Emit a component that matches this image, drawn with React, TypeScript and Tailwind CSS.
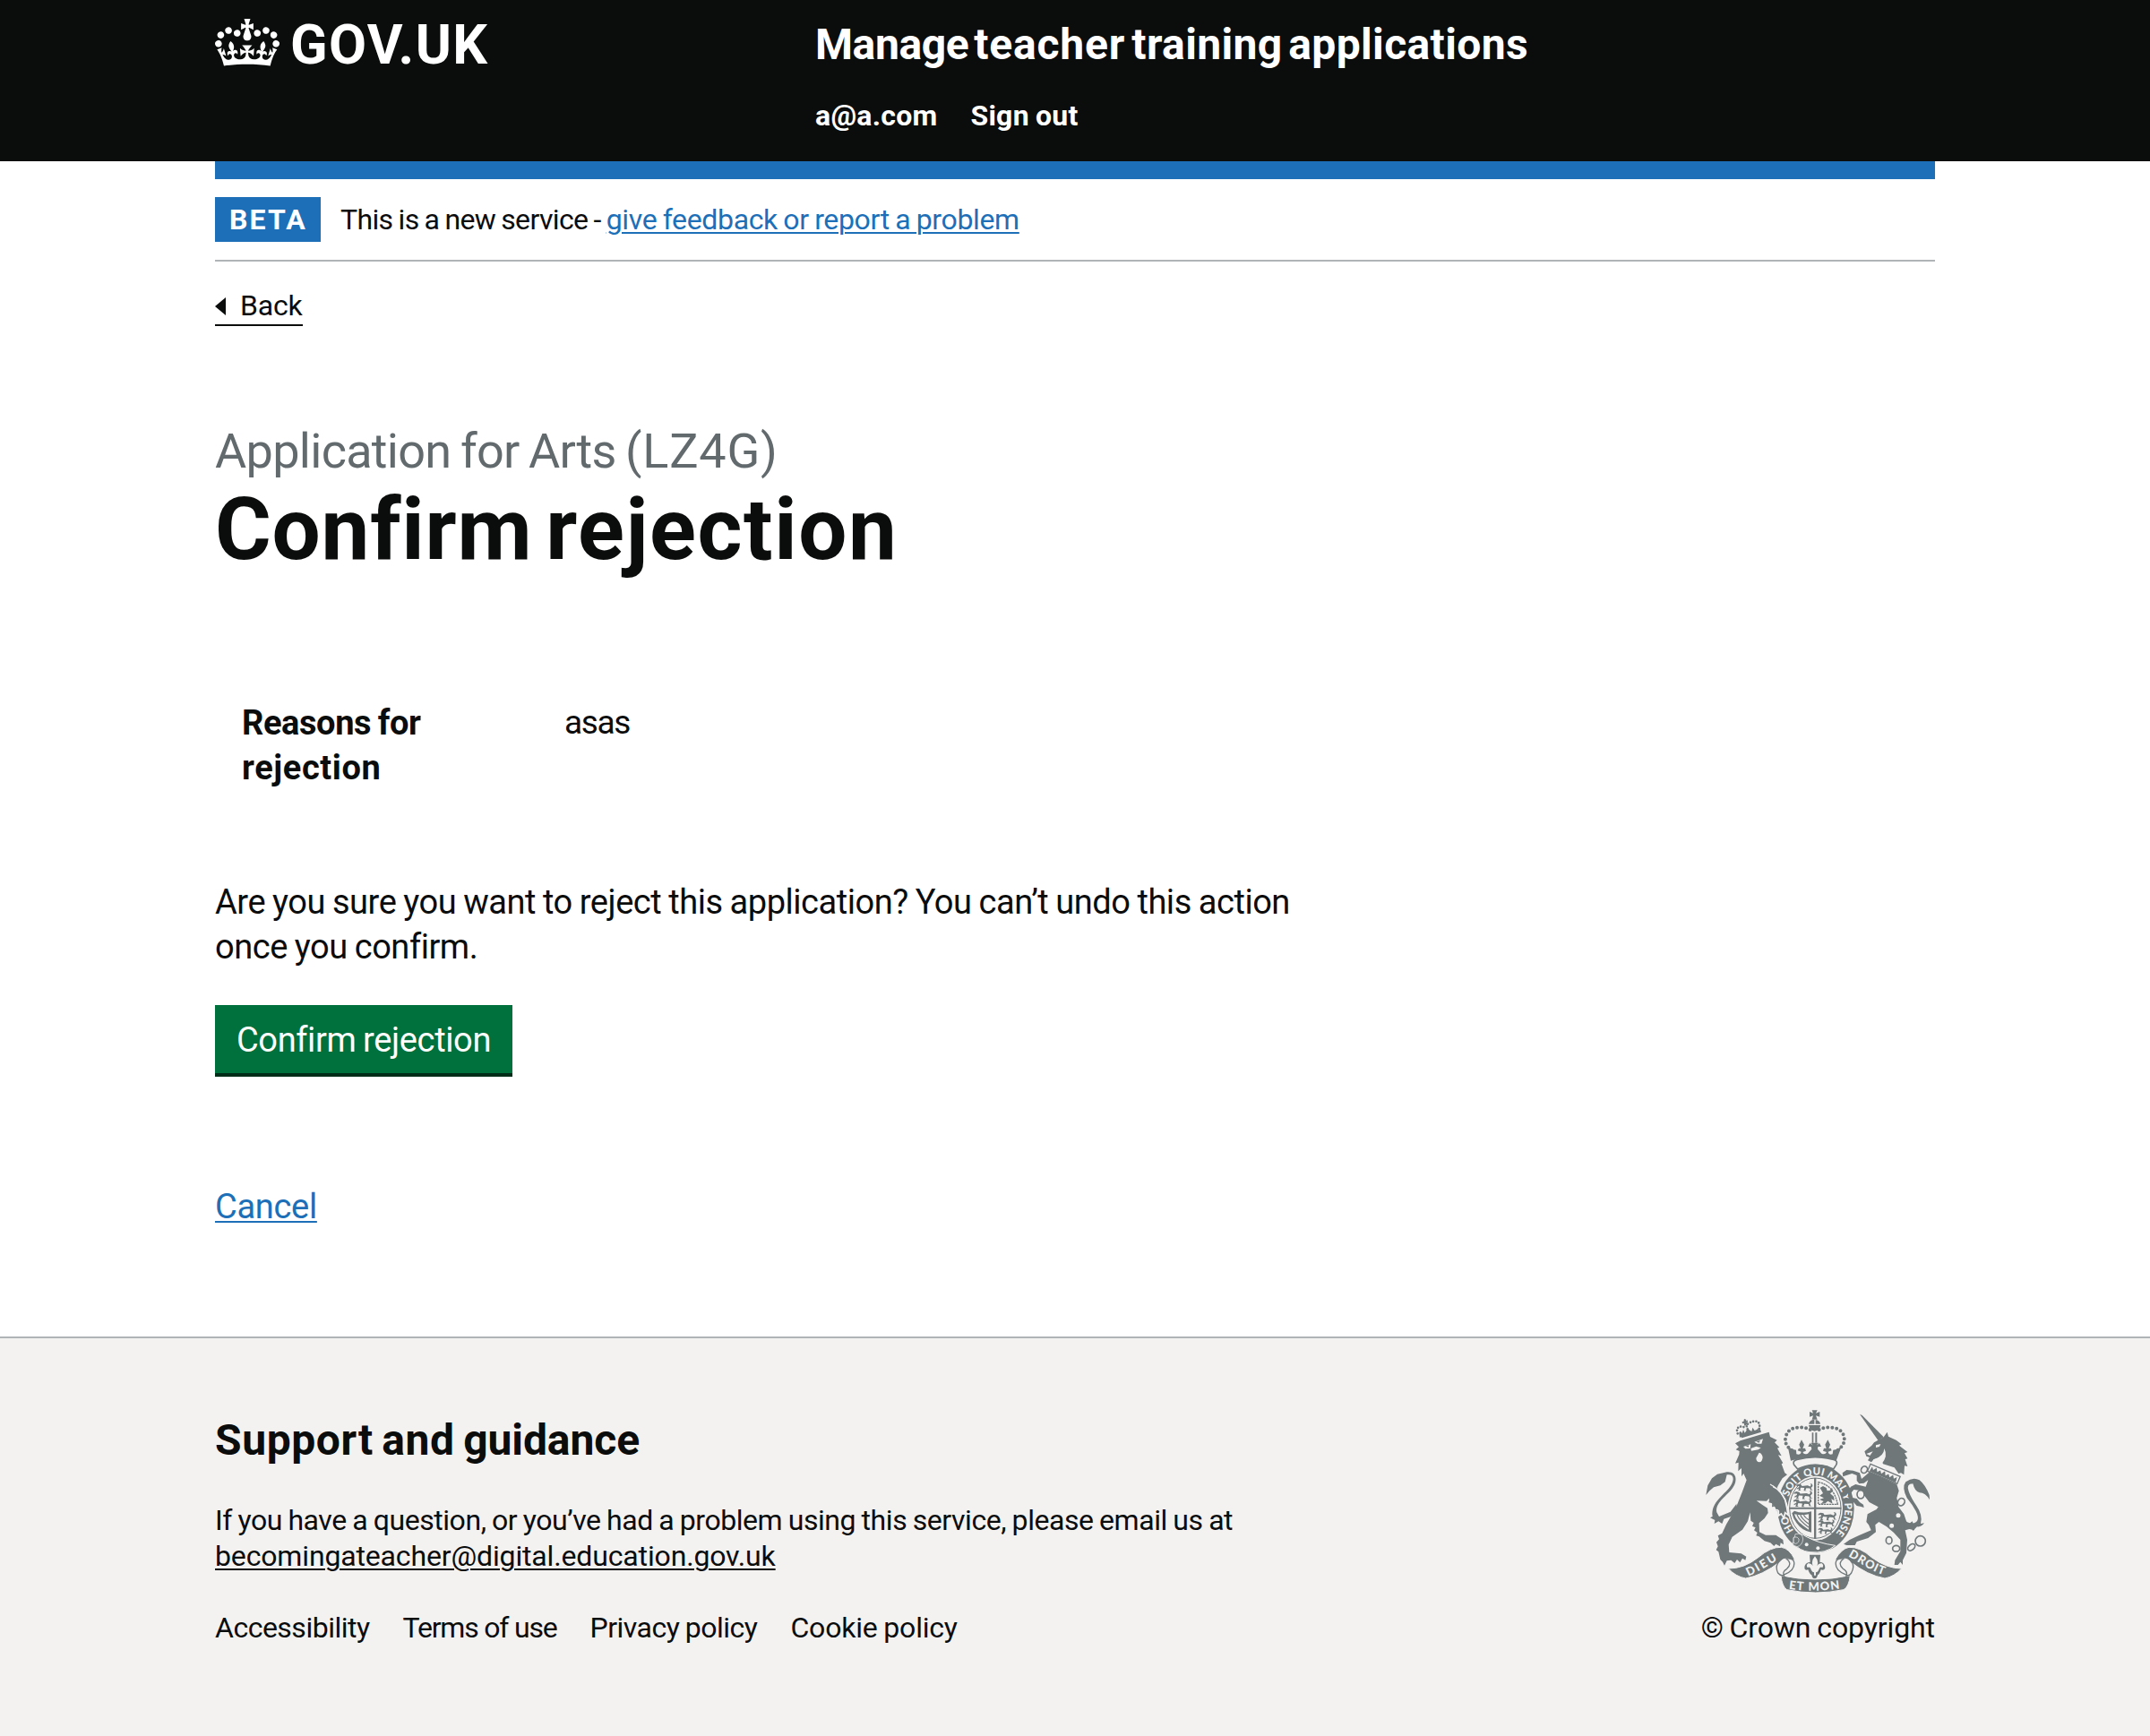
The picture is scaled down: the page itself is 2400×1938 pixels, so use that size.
import React from "react";

function Crown() {
  return (
    <svg viewBox="0 0 132 97" className="h-[53px] w-[72px] shrink-0" fill="currentColor" aria-hidden="true">
      <path
        fillRule="evenodd"
        d="M25 30.2c3.5 1.5 7.7-.2 9.1-3.7 1.5-3.6-.2-7.8-3.9-9.2-3.6-1.4-7.6.3-9.1 3.9-1.4 3.5.3 7.5 3.9 9zM9 39.5c3.6 1.5 7.8-.2 9.2-3.7 1.5-3.6-.2-7.8-3.9-9.1-3.6-1.5-7.6.2-9.1 3.8-1.4 3.5.3 7.5 3.8 9zM4.4 57.2c3.5 1.5 7.7-.2 9.1-3.8 1.5-3.6-.2-7.7-3.9-9.1-3.5-1.5-7.6.3-9.1 3.8-1.4 3.5.3 7.6 3.9 9.1zm38.3-21.4c3.5 1.5 7.7-.2 9.1-3.8 1.5-3.6-.2-7.7-3.9-9.1-3.6-1.5-7.6.3-9.1 3.8-1.3 3.6.4 7.7 3.9 9.1zm64.4-5.6c-3.6 1.5-7.8-.2-9.1-3.7-1.5-3.6.2-7.8 3.8-9.2 3.6-1.4 7.7.3 9.2 3.9 1.3 3.5-.4 7.5-3.9 9zm15.9 9.3c-3.6 1.5-7.7-.2-9.1-3.7-1.5-3.6.2-7.8 3.7-9.1 3.6-1.5 7.7.2 9.2 3.8 1.5 3.5-.3 7.5-3.8 9zm4.7 17.7c-3.6 1.5-7.8-.2-9.2-3.8-1.5-3.6.2-7.7 3.9-9.1 3.6-1.5 7.7.3 9.2 3.8 1.3 3.5-.4 7.6-3.9 9.1zM89.3 35.8c-3.6 1.5-7.8-.2-9.2-3.8-1.4-3.6.2-7.7 3.9-9.1 3.6-1.5 7.7.3 9.2 3.8 1.4 3.6-.3 7.7-3.9 9.1zM69.7 17.7l8.9 4.7V9.3l-8.9 2.8c-.2-.3-.5-.6-.9-.9L72.4 0H59.6l3.5 11.2c-.3.3-.6.5-.9.9l-8.8-2.8v13.1l8.8-4.7c.3.3.6.7.9.9l-5 15.4v.1c-.2.8-.4 1.6-.4 2.4 0 4.1 3.1 7.5 7 8.1h.2c.3 0 .7.1 1 .1.4 0 .7 0 1-.1h.2c4-.6 7.1-4.1 7.1-8.1 0-.8-.1-1.7-.4-2.4V34l-5.1-15.4c.4-.2.7-.6 1-.9zM66 92.8c16.9 0 32.8 1.1 47.1 3.2 4-16.9 8.9-26.7 14-33.5l-9.6-3.4c1 4.9 1.1 7.2 0 10.2-1.5-1.4-3-4.3-4.2-8.7L108.6 76c2.8-2 5-3.2 7.5-3.3-4.4 9.4-10 11.9-13.6 11.2-4.3-.8-6.3-4.6-5.6-7.9 1-4.7 5.7-5.9 8-.5 4.3-8.7-3-11.4-7.6-8.8 7.1-7.2 7.9-13.5 2.1-21.1-8 6.1-8.1 12.3-4.5 20.8-4.7-5.4-12.1-2.5-9.5 6.2 3.4-5.2 7.9-2 7.2 3.1-.6 4.3-6.4 7.8-13.5 7.2-10.3-.9-10.9-8-11.2-13.8 2.5-.5 7.1 1.8 11 7.3L80.2 60c-4.1 4.4-8 5.3-12.3 5.4 1.4-4.4 8-11.6 8-11.6H55.5s6.4 7.2 7.9 11.6c-4.2-.1-8-1-12.3-5.4l1.4 16.4c3.9-5.5 8.5-7.7 10.9-7.3-.3 5.8-.9 12.8-11.1 13.8-7.2.6-12.9-2.9-13.5-7.2-.7-5 3.8-8.3 7.1-3.1 2.7-8.7-4.6-11.6-9.4-6.2 3.7-8.5 3.6-14.7-4.6-20.8-5.8 7.6-5 13.9 2.2 21.1-4.7-2.6-11.9.1-7.7 8.8 2.3-5.5 7.1-4.2 8.1.5.7 3.3-1.3 7.1-5.7 7.9-3.5.7-9-1.8-13.5-11.2 2.5.1 4.7 1.3 7.5 3.3l-4.7-15.4c-1.2 4.4-2.7 7.2-4.3 8.7-1.1-3-.9-5.3 0-10.2l-9.5 3.4c5 6.9 9.9 16.7 14 33.5 14.8-2.1 30.8-3.2 47.7-3.2z"
      />
    </svg>
  );
}

const INK = "#6f7779";
const PAPER = "#f3f2f1";

// Walking lion, stacked three times in the first and fourth quarters.
function SmallLion({ x, y, s = 1 }: { x: number; y: number; s?: number }) {
  return (
    <g transform={`translate(${x} ${y}) scale(${s})`}>
      <path
        d="M0 4L8 0l10 2 4 6 22-2 10 4 4-6-4-6 8 2 2 8-6 6 2 8 6 2-10 1-3-8-14-1-4 8 5 3-11 0 2-12-14-1-3 8 4 4H7l3-8-8 3 0-4 9-5-2-5-9 2z"
        fill={INK}
      />
    </g>
  );
}

function Crest() {
  return (
    <svg viewBox="72 42 750 612" className="h-[204px] w-[250px]" fill={INK} aria-hidden="true">
      <defs>
        <path id="garter" d="M375 455A97 113 0 1 1 507 455" />
        <path id="dieu" d="M214 599C248 586 284 560 322 540" />
        <path id="mon" d="M350 641Q437 654 527 639" />
        <path id="droit" d="M549 532C588 552 626 584 676 597" />
      </defs>

      {/* lion */}
      <g transform="translate(45 15)">
        <path d="M126 139L143 130 239 101 243 117 266 128 258 136 274 152 267 155 281 181 270 178 286 205 281 208 292 238 300 244 284 256 270 279 266 288 287 314 297 345 302 378 294 368 290 386 282 374 272 380 272 366 262 364 263 350 249 352 250 340 238 337 242 320 231 332 197 331 216 344 234 356 236 372 224 390 206 406 207 436 228 446 262 446 286 462 288 478 278 472 276 484 262 476 256 483 244 472 224 466 206 451 196 448 200 438 189 430 194 421 183 416 188 405 178 398 176 370 168 400 150 428 116 452 104 478 106 504 146 508 163 518 160 530 150 524 142 538 132 528 124 540 112 530 98 532 90 548 84 536 76 528 70 502 62 496 68 484 63 470 72 460 68 448 82 440 96 410 110 386 130 350 150 300 164 262 154 240 147 250 147 222 136 232 137 203 126 206 139 176 140 165 128 160 138 151z" />
        <path d="M28 312L34 280 48 256 66 242 92 236C132 228 136 266 116 290C94 318 58 338 64 370L72 384 110 368 130 342 132 354 112 384 88 392 82 408 70 400 56 408 58 396 42 388 50 384C44 340 80 318 104 290C124 266 126 240 98 244L92 268 76 280 54 286 40 298z" />
        <path d="M153 150L178 142 176 156 160 157zM190 134L219 124 214 140 200 140z" fill={PAPER} />
        <path d="M178 156L196 149 212 154 203 160 180 164zM206 170q10 2 12 16-2 16-11 16-11-2-11-14z" fill={PAPER} />
        <path d="M160 147l12-2-2 7zM196 132l14-2-5 7z" />
        <path d="M144 112L210 92 213 101 148 121z" />
        <path d="M139 103l5-5 5 7 4-12 5 11 6-9 3-10 6 9 8 5 3-13 7 10 7-3 6-5-1 12-62 19z" />
        <path d="M134 106C126 84 144 78 158 86M168 74C190 58 214 62 206 92M162 72L168 96" fill="none" stroke={INK} strokeWidth="8" strokeDasharray="0 10" strokeLinecap="round" />
        <path d="M156 57l7 2-1 5 5-3 1 8-6-1 2 10-7 2-2-9-5 2-1-7 5 0z" />
      </g>

      {/* imperial crown */}
      <path d="M428 43h18l-5 10 13-5v17l-13-4 5 13h-18l4-13-12 4V48l12 5z" />
      <path d="M431 75h5v14h-19q4-12 14-14zm9 0q14 2 16 14h-16zM417 93h40q-4 19-20 20-16-1-20-20zM428 118h5v34h-5zm11 0h6v34h-6z" />
      <path d="M422 108C404 98 350 92 341 130 333 154 348 168 362 178M452 108C470 98 524 92 535 130 541 154 526 168 512 178" fill="none" stroke={INK} strokeWidth="12" strokeDasharray="0 15" strokeLinecap="round" />
      <path d="M347 164l16 10 12 2 1 14q14 4 16-8l-12-4 4-8 6 1-5-13 8-16 9 16-5 13 8-1 3 9-11 4q4 11 17 5l13-15-2-8h-10l6-12 10 8-7-9h26l-7 9 10-8 6 12h-11l-1 8 13 15q12 6 17-5l-12-4 3-9 8 1-4-13 9-16 8 16-5 13 7-1 3 8-12 4q2 12 15 8l2-14 12-2 16-10-18 48q-73-22-152 0z" />
      <path d="M368 226Q362 212 378 208 438 192 500 208 516 212 509 226L500 240Q438 212 380 240z" fill={PAPER} stroke={INK} strokeWidth="5" />

      {/* garter and shield */}
      <ellipse cx="441" cy="372" rx="128" ry="148" />
      <ellipse cx="439" cy="371" rx="92" ry="108" fill={PAPER} />
      <ellipse cx="439" cy="371" rx="86" ry="101" fill="none" stroke={INK} strokeWidth="3" />
      <path d="M352 368h174v6H352zM435 270h7v204h-7z" />
      <SmallLion x={376} y={290} s={0.85} />
      <SmallLion x={368} y={315} s={0.95} />
      <SmallLion x={366} y={341} s={0.95} />
      <SmallLion x={449} y={386} s={0.95} />
      <SmallLion x={449} y={411} s={0.85} />
      <SmallLion x={449} y={437} s={0.75} />
      <path d="M449 284Q500 292 514 358H449z" fill="none" stroke={INK} strokeWidth="4" strokeDasharray="7 2" />
      <path d="M455 303l10-6 11 6 3 10 10-2 6-9 3 12-9 8 12 10 2 14-10-6 4 16-16-9-8 8-16 2 10-9-14-6 15-5-15-8 12-8z" />
      <path d="M361 388l8-8q26 10 57 2v70q-30-4-50-32-12-16-15-32zm8 3q4 24 48 52v-52q-24 6-48 0z" fillRule="evenodd" />
      <path d="M378 393q8 20 39 42M389 394q6 14 28 30M400 394q4 8 17 16" fill="none" stroke={INK} strokeWidth="3.5" />
      <g fill={PAPER} className="font-['Lato'] text-[34px] font-black">
        <text><textPath href="#garter" startOffset="12" textLength="54">HO</textPath></text>
        <text><textPath href="#garter" startOffset="130" textLength="380">SOIT QUI MAL Y PENSE</textPath></text>
      </g>
      <path d="M366 470q24-20 42-4 40 22 98 30-32 28-86 22-34-4-54-30z" stroke={PAPER} strokeWidth="3" />
      <path d="M372 458q24-6 26 16-2 22-20 26-14-2-16-14l12 4q12-4 10-16-4-8-14-6z" stroke={PAPER} strokeWidth="2" />
      <circle cx="410" cy="493" r="6" fill={PAPER} />
      <circle cx="448" cy="505" r="6" fill={PAPER} />
      <path d="M420 527h36l-2 24q18 2 18 20-2 10-14 6-4 14-11 18-2 12-10 12-8 0-10-12-8-4-12-18-12 4-12-6 0-18 19-20z" />
      <path d="M438 532q14 16 7 32 6-10 16-8 8 6 2 14-6-4-10 2-4 12-12 14v10h-6v-10q-8-2-12-14-4-6-10-2-6-8 2-14 10-2 16 8-7-16 7-32z" fill={PAPER} />

      {/* lion's paw over the garter */}
      <path d="M300 300L324 318 338 342 344 370 348 394 338 386 334 404 325 390 316 396 316 378 304 376 300 350z" stroke={PAPER} strokeWidth="5" />
      <path d="M284 296L312 308 332 342 340 372 320 380 300 364 284 340z" />
      <path d="M288 291C322 310 346 344 350 390" fill="none" stroke={PAPER} strokeWidth="4" />

      {/* unicorn */}
      <g transform="translate(420 15)">
        <path d="M168 41L176 45 248 118 230 130z" />
        <path d="M248 118L260 101 264 116 290 128 308 142 300 146 328 168 318 172 328 190 320 192 328 216 318 214 316 244 306 238 298 240 284 220 246 208 236 186 215 192 207 202 195 196 201 186 190 182 184 166 208 146 216 136z" />
        <path d="M222 145l16-4-4 9-12 3zM190 174l22-8-10 14zM213 194Q250 182 250 156 264 182 240 210L220 212z" fill={PAPER} />
        <path d="M202 234L292 276 299 298 292 322 298 352 316 376 328 412 344 400 348 410 362 405 348 420 352 430 334 426 320 430 327 462 324 506 312 530 312 546 304 536 296 546 284 546 286 530 304 500 304 462 282 438 258 418 232 402 220 412 222 436 196 456 158 468 152 480 124 480 114 476 134 462 164 448 206 430 198 412 190 402 194 376 224 360 230 352 200 336 182 312 166 296 148 294 138 306 140 320 158 324 168 336 180 344 182 354 170 350 158 348 144 332 130 322 128 300 138 284 154 276 188 284 196 262 182 272 166 274 158 264 158 246 142 240 112 250 110 238 124 228 146 230 168 238 174 258z" />
        <g transform="translate(204 208) rotate(23)">
          <path d="M0 0H108V26H0z" fill={PAPER} stroke={INK} strokeWidth="4" />
          <path d="M6 24L9 6l7 9 8-11 7 12 8-9 7 9 8-13 7 13 8-9 7 9 8-12 7 11 8-9 3 18z" />
        </g>
        <path d="M312 390Q330 410 350 406 372 398 356 366 344 344 326 322 308 286 322 268 346 250 368 262 388 278 401 312L402 328Q388 304 368 304 352 300 346 274 322 274 332 300 340 322 358 348 380 380 372 408L384 406Q374 420 360 418L346 432 340 420 322 424z" />
        {/* chain */}
        <g fill={PAPER} stroke={INK} strokeWidth="5">
          <ellipse cx="183" cy="227" rx="10" ry="12" transform="rotate(30 183 227)" />
          <ellipse cx="171" cy="310" rx="12" ry="14" />
          <ellipse cx="307" cy="335" rx="11" ry="13" transform="rotate(30 307 335)" />
          <circle cx="297" cy="380" r="10" />
          <circle cx="275" cy="415" r="10" />
          <ellipse cx="266" cy="464" rx="10" ry="12" />
          <ellipse cx="290" cy="491" rx="12" ry="10" />
          <ellipse cx="341" cy="487" rx="14" ry="9" transform="rotate(-40 341 487)" />
          <circle cx="371" cy="466" r="17" />
        </g>
      </g>

      {/* motto scroll */}
      <g stroke={PAPER} strokeWidth="3">
        <path d="M148 573Q200 574 248 536 290 500 326 502 352 506 370 542L360 546Q338 532 322 550 262 596 206 606 172 600 148 573z" />
        <path d="M728 573Q680 574 628 536 588 500 552 502 528 506 506 542L516 546Q540 532 556 550 614 596 672 606 704 600 728 573z" />
        <path d="M324 596Q436 622 556 596 552 634 534 644 440 664 344 644 328 634 324 596z" />
      </g>
      <path d="M322 546Q302 562 314 588 326 602 338 592 372 578 368 552 366 538 342 540 364 556 344 574 326 584 336 600M556 546Q574 562 560 588 550 602 538 592 504 578 508 552 510 538 534 540 512 556 532 574 550 584 542 600" fill={PAPER} stroke={INK} strokeWidth="4" />
      <g fill={PAPER} className="font-['Lato'] text-[39px] font-black">
        <text><textPath href="#dieu" textLength="112">DIEU</textPath></text>
        <text><textPath href="#mon" textLength="172">ET MON</textPath></text>
        <text><textPath href="#droit" textLength="134">DROIT</textPath></text>
      </g>
    </svg>
  );
}

const LINK = "underline decoration-2 underline-offset-[3px]";

export default function App() {
  return (
    <div className="flex min-h-[1938px] flex-col bg-white font-['Roboto',sans-serif] text-[#0b0c0c] whitespace-nowrap">
      <header className="h-[180px] bg-[#0b0c0c] text-white">
        <div className="mx-auto flex w-[1920px] items-start">
          <a className="flex w-[670px] items-start pt-[21px]">
            <Crown />
            <span className="-mt-px ml-[12px] text-[61px] leading-[60px] font-bold tracking-[1.4px]">GOV.UK</span>
          </a>
          <div className="pt-5">
            <div className="text-[48px] leading-[60px] font-bold tracking-[0.35px] [word-spacing:-5.5px]">
              <span className="tracking-[-0.4px]">Manage </span>
              <span className="tracking-[0.8px]">teacher </span>
              training applications
            </div>
            <nav className="mt-[24px] flex gap-[37px] text-[32px] leading-[50px] font-bold tracking-[0.25px]">
              <a>a@a.com</a>
              <a className="[word-spacing:-1px]">Sign out</a>
            </nav>
          </div>
        </div>
      </header>

      <div className="mx-auto w-[1920px]">
        <div className="h-5 bg-[#1d70b8]" />
        <div className="flex items-center border-b-2 border-[#b1b4b6] py-5 text-[32px] leading-[50px]">
          <strong className="h-[50px] w-[118px] bg-[#1d70b8] pl-4 font-bold tracking-[2.1px] text-white">BETA</strong>
          <span className="ml-[22px] tracking-[-0.65px] [word-spacing:-1.2px]">
            This is a new service -{" "}
            <a className={`${LINK} tracking-[-0.35px] text-[#1d70b8]`}>give feedback or report a problem</a>
          </span>
        </div>

        <a className="mt-[29px] flex w-[98px] items-center border-b-2 border-[#0b0c0c] pb-px text-[32px] leading-[40px]">
          <svg viewBox="0 0 12 20" className="mt-[2px] h-5 w-3" fill="currentColor"><path d="M0 10L12 0v20z" /></svg>
          <span className="ml-4 tracking-[-0.2px]">Back</span>
        </a>

        <main>
          <h1 className="mt-[110px] font-bold">
            <span className="block text-[54px] leading-[60px] font-normal tracking-[-0.7px] text-[#626a6e] [word-spacing:-2.3px]">
              Application for Arts <span className="tracking-[0.8px]">(LZ4G)</span>
            </span>
            <span className="mt-[7px] block text-[96px] leading-[100px] tracking-[0.8px] [word-spacing:-10px]">
              Confirm <span className="tracking-[1.6px]">rejection</span>
            </span>
          </h1>

          <dl className="mt-[141px] flex pl-[30px] text-[38px] leading-[50px]">
            <dt className="w-[360px] font-bold">
              <span className="tracking-[-0.4px] [word-spacing:-1.5px]">Reasons for</span>
              <br />
              <span className="tracking-[0.6px]">rejection</span>
            </dt>
            <dd className="text-[37px] tracking-[-1.4px]">asas</dd>
          </dl>

          <p className="mt-[100px] text-[38px] leading-[50px] tracking-[-0.46px] [word-spacing:-1px]">
            Are you sure you want to reject this application? You can’t undo this action
            <br />
            once you confirm.
          </p>

          <button className="mt-10 block h-[80px] w-[332px] border-b-4 border-[#002d18] bg-[#00703c] pt-[2px] text-[38px] leading-[74px] tracking-[-0.35px] text-white [word-spacing:-1.5px]">
            Confirm rejection
          </button>

          <p className="mt-[120px] text-[38px] leading-[50px] tracking-[-0.3px]">
            <a className={`${LINK} text-[#1d70b8]`}>Cancel</a>
          </p>
        </main>
      </div>

      <footer className="mt-[120px] flex-1 border-t-2 border-[#b1b4b6] bg-[#f3f2f1]">
        <div className="mx-auto flex w-[1920px] justify-between text-[32px] leading-[40px]">
          <div className="pt-[84px]">
            <h2 className="text-[48px] leading-[60px] font-bold tracking-[0.6px] [word-spacing:-3px]">
              Support and <span className="tracking-[-0.1px]">guidance</span>
            </h2>
            <p className="mt-[39px] tracking-[-0.44px] [word-spacing:-1px]">
              If you have a question, or you’ve had a problem using this service, please email us at
              <br />
              <a className={`${LINK} tracking-[-0.15px]`}>becomingateacher@digital.education.gov.uk</a>
            </p>
            <nav className="mt-10 flex gap-[37px]">
              <a className="tracking-[-0.5px]">Accessibility</a>
              <a className="tracking-[-1.2px]">Terms of use</a>
              <a className="tracking-[-0.5px] [word-spacing:-1px]">Privacy policy</a>
              <a className="tracking-[-0.2px] [word-spacing:-1px]">Cookie policy</a>
            </nav>
          </div>
          <div className="flex flex-col items-end pt-[80px]">
            <div className="pr-[6px]">
              <Crest />
            </div>
            <span className="mt-[19px] tracking-[-0.1px] [word-spacing:-1px]">© Crown copyright</span>
          </div>
        </div>
      </footer>
    </div>
  );
}
